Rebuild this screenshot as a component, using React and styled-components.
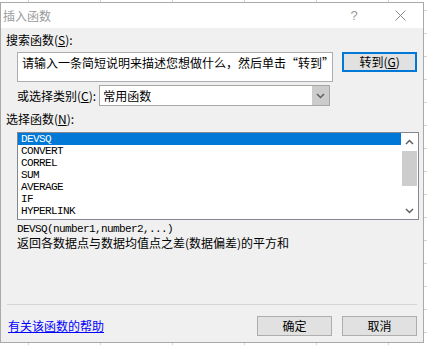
import React from "react";
import styled, { createGlobalStyle } from "styled-components";

const GlobalStyle = createGlobalStyle`
	html, body {
		margin: 0;
		height: 345px;
		overflow: hidden;
	}
	body {
		background-color: #ffffff;
		background-image:
			repeating-linear-gradient(to right, transparent 0 28px, #d4d4d4 28px 29px, transparent 29px 72px),
			repeating-linear-gradient(to bottom, transparent 0 10px, #d4d4d4 10px 11px, transparent 11px 23px);
		background-size: 72px 100%, 100% 23px;
		background-position: 0 0, 0 0;
		font-family: "Noto Sans CJK SC", "Noto Sans", sans-serif;
	}
`;

const CJK = `"Noto Sans CJK SC", "Noto Sans", sans-serif`;
const MONO = `"Liberation Mono", "DejaVu Sans Mono", monospace`;

const Dialog = styled.div`
	width: 424px;
	height: 341px;
	margin-top: 2px;
	box-sizing: border-box;
	border: 1px solid #a9a9a9;
	background: #f0f0f0;
	display: flex;
	flex-direction: column;
	font-family: ${CJK};
	font-size: 12px;
	color: #000;
`;

const TitleBar = styled.div`
	height: 25px;
	background: #fff;
	display: flex;
	align-items: center;
	flex-shrink: 0;
`;

const Title = styled.div`
	flex: 1;
	padding-left: 2px;
	color: #9a9a9a;
	font-size: 12px;
	line-height: 16px;
`;

const Caption = styled.div`
	width: 46px;
	height: 25px;
	display: flex;
	align-items: center;
	justify-content: center;
	color: #9a9a9a;
	font-family: "Liberation Sans", sans-serif;
	font-size: 13px;
`;

const Body = styled.div`
	flex: 1;
	display: flex;
	flex-direction: column;
	padding: 0 6px 0 5px;
`;

const Label = styled.div`
	height: 16px;
	line-height: 16px;
	margin-top: ${(p) => p.$top || 0}px;
	margin-left: ${(p) => p.$indent || 0}px;
	white-space: nowrap;

	u {
		text-decoration: underline;
	}
`;

const Row = styled.div`
	display: flex;
	align-items: ${(p) => p.$align || "flex-start"};
	margin-top: ${(p) => p.$top || 0}px;
	margin-left: ${(p) => p.$indent || 0}px;
	gap: ${(p) => p.$gap || 0}px;
`;

const SearchBox = styled.div`
	width: 318px;
	height: 30px;
	box-sizing: border-box;
	border: 1px solid #abadb3;
	background: #fff;
	padding: 2px 0 0 4px;
	line-height: 16px;
	white-space: nowrap;
	overflow: hidden;
`;

const Button = styled.div`
	width: 75px;
	height: 20px;
	box-sizing: border-box;
	border: ${(p) => (p.$focused ? "2px solid #0078d7" : "1px solid #adadad")};
	background: #e1e1e1;
	display: flex;
	align-items: center;
	justify-content: center;
	line-height: 16px;

	u {
		text-decoration: underline;
	}
`;

const Combo = styled.div`
	width: 231px;
	height: 21px;
	box-sizing: border-box;
	border: 1px solid #a6a6a6;
	background: #fff;
	display: flex;
	align-items: stretch;
`;

const ComboText = styled.div`
	flex: 1;
	padding-left: 3px;
	line-height: 19px;
`;

const ComboArrow = styled.div`
	width: 17px;
	background: #cccccc;
	display: flex;
	align-items: center;
	justify-content: center;
`;

const ListBox = styled.div`
	width: 402px;
	height: 88px;
	margin-left: 11px;
	margin-top: 5px;
	box-sizing: border-box;
	border: 1px solid #828790;
	background: #fff;
	display: flex;
`;

const Items = styled.div`
	flex: 1;
	display: flex;
	flex-direction: column;
`;

const Item = styled.div`
	height: 12px;
	line-height: 12px;
	padding-left: 3px;
	font-family: ${MONO};
	font-size: 11px;
	letter-spacing: -0.6px;
	-webkit-font-smoothing: none;
	background: ${(p) => (p.$selected ? "#0078d7" : "transparent")};
	color: ${(p) => (p.$selected ? "#fff" : "#000")};
`;

const ScrollBar = styled.div`
	width: 17px;
	display: flex;
	flex-direction: column;
	background: #fff;
`;

const ScrollArrow = styled.div`
	height: 17px;
	display: flex;
	align-items: center;
	justify-content: center;
`;

const ScrollTrack = styled.div`
	flex: 1;
	padding: 1px 1px 0;
`;

const Thumb = styled.div`
	height: 35px;
	background: #cdcdcd;
`;

const Syntax = styled.div`
	margin-left: 11px;
	margin-top: 2px;
	height: 14px;
	line-height: 14px;
	font-family: ${MONO};
	font-size: 11px;
	letter-spacing: -0.6px;
`;

const Desc = styled.div`
	margin-left: 11px;
	height: 14px;
	line-height: 14px;
	white-space: nowrap;
`;

const Separator = styled.div`
	height: 1px;
	background: #d5d5d5;
	margin: 54px 0 0 1px;
`;

const Footer = styled.div`
	display: flex;
	align-items: center;
	margin-top: 11px;
	gap: 10px;
`;

const HelpLink = styled.a`
	flex: 1;
	margin-left: 2px;
	color: #0000ff;
	text-decoration: underline;
	line-height: 16px;
	cursor: pointer;
`;

const Chevron = ({ up }) => (
	<svg width="9" height="6" viewBox="0 0 9 6">
		<path
			d={up ? "M1 5 L4.5 1.5 L8 5" : "M1 1 L4.5 4.5 L8 1"}
			fill="none"
			stroke="#606060"
			strokeWidth="1.5"
		/>
	</svg>
);

const items = ["DEVSQ", "CONVERT", "CORREL", "SUM", "AVERAGE", "IF", "HYPERLINK"];

export default function App() {
	return (
		<>
			<GlobalStyle />
			<Dialog>
				<TitleBar>
					<Title>插入函数</Title>
					<Caption>?</Caption>
					<Caption>
						<svg width="11" height="11" viewBox="0 0 11 11">
							<path d="M0.5 0.5 L10.5 10.5 M10.5 0.5 L0.5 10.5" stroke="#8a8a8a" strokeWidth="1" />
						</svg>
					</Caption>
				</TitleBar>
				<Body>
					<Label $top={4}>
						搜索函数(<u>S</u>):
					</Label>
					<Row $top={4} $indent={11} $gap={9}>
						<SearchBox>请输入一条简短说明来描述您想做什么，然后单击“转到”</SearchBox>
						<Button $focused>
							转到(<u>G</u>)
						</Button>
					</Row>
					<Row $top={3} $indent={11} $gap={3} $align="center">
						<Label>
							或选择类别(<u>C</u>):
						</Label>
						<Combo>
							<ComboText>常用函数</ComboText>
							<ComboArrow>
								<Chevron />
							</ComboArrow>
						</Combo>
					</Row>
					<Label $top={5}>
						选择函数(<u>N</u>):
					</Label>
					<ListBox>
						<Items>
							{items.map((it, i) => (
								<Item key={it} $selected={i === 0}>
									{it}
								</Item>
							))}
						</Items>
						<ScrollBar>
							<ScrollArrow>
								<Chevron up />
							</ScrollArrow>
							<ScrollTrack>
								<Thumb />
							</ScrollTrack>
							<ScrollArrow>
								<Chevron />
							</ScrollArrow>
						</ScrollBar>
					</ListBox>
					<Syntax>DEVSQ(number1,number2,...)</Syntax>
					<Desc>返回各数据点与数据均值点之差(数据偏差)的平方和</Desc>
					<Separator />
					<Footer>
						<HelpLink>有关该函数的帮助</HelpLink>
						<Button>确定</Button>
						<Button>取消</Button>
					</Footer>
				</Body>
			</Dialog>
		</>
	);
}
